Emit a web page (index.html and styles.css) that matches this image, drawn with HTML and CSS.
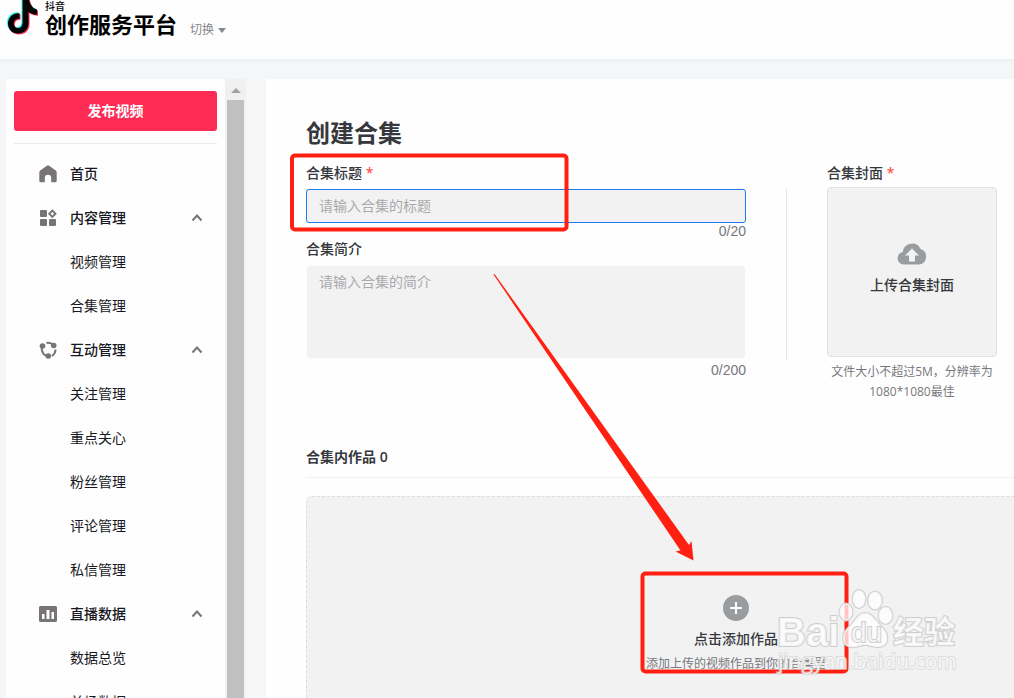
FILE: index.html
```html
<!DOCTYPE html>
<html lang="zh-CN">
<head>
<meta charset="utf-8">
<title>创作服务平台</title>
<link rel="stylesheet" href="styles.css">
</head>
<body>
<header class="topbar">
  <svg class="logo" width="36" height="36" viewBox="0 0 36 36" aria-hidden="true">
    <defs><path id="note" d="M18.500 -4H24.500C24.800 3 28 8.500 33 9.500V14.800C29.500 14.800 27 13.800 24.500 12V23C24.500 29.500 20 33.500 14 33.500S4 29.500 4 23.500 9 12.500 15.500 13.200V18.800C12.500 18.300 9.700 20 9.700 23.300 9.700 26.300 11.700 28 14 28S18.500 26 18.500 23Z"/></defs>
    <use href="#note" x="1" y="1" fill="#fe2c55"/>
    <use href="#note" x="-1" y="-1" fill="#25f4ee"/>
    <use href="#note" fill="#050505"/>
  </svg>
  <div class="brand"><span class="brand-small">抖音</span><span class="brand-name">创作服务平台</span></div>
  <button class="switch" type="button">切换<span class="caret"></span></button>
</header>
<div class="layout">
  <aside class="sidebar">
    <div class="sidebar-body">
      <button class="publish" type="button">发布视频</button>
      <nav class="nav">
        <a class="item group" href="#"><svg class="icon" viewBox="0 0 20 20"><path d="M10 1.200Q10.600 1.200 11.500 2L17.500 6.300Q18.700 7.200 18.700 8.500V16.700Q18.700 18.300 17.200 18.300H13.200V14Q13.200 10.800 10 10.800T6.800 14V18.300H2.800Q1.300 18.300 1.300 16.700V8.500Q1.300 7.200 2.500 6.300L8.500 2Q9.400 1.200 10 1.200Z"/></svg>首页</a>
        <a class="item group" href="#"><svg class="icon" viewBox="0 0 20 20"><rect x="2" y="2" width="7" height="7" rx="1"/><rect x="2" y="11" width="7" height="7" rx="1"/><rect x="11" y="11" width="7" height="7" rx="1"/><path fill-rule="evenodd" d="M14.300 1.200L18.800 5.700L14.300 10.200L9.900 5.700ZM14.300 3.900L12.500 5.700L14.300 7.500L16.100 5.700Z"/></svg>内容管理<svg class="chevron" viewBox="0 0 12 12"><path d="M1.500 8.500L6 3.500L10.500 8.500"/></svg></a>
        <a class="item" href="#">视频管理</a>
        <a class="item" href="#">合集管理</a>
        <a class="item group" href="#"><svg class="icon" viewBox="0 0 20 20"><path class="ring" d="M8.500 3Q12.500 2 16 5.500M17.500 9.500Q17.500 13.500 14 16M10.300 16.500Q3.500 15.500 3.500 6"/><circle cx="4.500" cy="6" r="2.800"/><circle cx="15.700" cy="5.500" r="2.800"/><circle cx="10.300" cy="16" r="2.800"/></svg>互动管理<svg class="chevron" viewBox="0 0 12 12"><path d="M1.500 8.500L6 3.500L10.500 8.500"/></svg></a>
        <a class="item" href="#">关注管理</a>
        <a class="item" href="#">重点关心</a>
        <a class="item" href="#">粉丝管理</a>
        <a class="item" href="#">评论管理</a>
        <a class="item" href="#">私信管理</a>
        <a class="item group" href="#"><svg class="icon" viewBox="0 0 20 20"><path fill-rule="evenodd" d="M2.500 2H17.500Q19 2 19 3.500V16.500Q19 18 17.500 18H2.500Q1 18 1 16.500V3.500Q1 2 2.500 2ZM4 10V15H6.500V10ZM8.500 6V15H11.500V6ZM13.500 8V15H16V8Z"/></svg>直播数据<svg class="chevron" viewBox="0 0 12 12"><path d="M1.500 8.500L6 3.500L10.500 8.500"/></svg></a>
        <a class="item" href="#">数据总览</a>
        <a class="item" href="#">单场数据</a>
      </nav>
    </div>
    <div class="scrollbar"><span class="scroll-up"></span><span class="thumb"></span></div>
  </aside>
  <main class="panel">
    <h1>创建合集</h1>
    <form class="form">
      <div class="fields">
        <label class="label" for="title">合集标题 <span class="required">*</span></label>
        <input class="control title-input" id="title" type="text" placeholder="请输入合集的标题">
        <div class="count">0/20</div>
        <label class="label" for="intro">合集简介</label>
        <textarea class="control intro-input" id="intro" placeholder="请输入合集的简介"></textarea>
        <div class="count intro-count">0/200</div>
      </div>
      <div class="divider"></div>
      <div class="cover">
        <div class="label">合集封面 <span class="required">*</span></div>
        <button class="upload" type="button">
          <svg width="30" height="24" viewBox="0 0 30 24" fill="#9a9da0" aria-hidden="true"><path fill-rule="evenodd" d="M6.500 23.500A6.300 6.300 0 0 1 5.800 11A9.300 9.300 0 0 1 23.500 8A8 8 0 0 1 22.500 23.500ZM15 7.500L8 14.500H12V20.500H18V14.500H22Z"/></svg>
          上传合集封面
        </button>
        <p class="hint">文件大小不超过5M，分辨率为<br>1080*1080最佳</p>
      </div>
    </form>
    <h2>合集内作品 0</h2>
    <button class="dropzone" type="button">
      <svg width="26" height="26" viewBox="0 0 26 26" aria-hidden="true"><circle cx="13" cy="13" r="13" fill="#9a9da0"/><path d="M13 7V19M7 13H19" stroke="#fff" stroke-width="2"/></svg>
      <span class="drop-title">点击添加作品</span>
      <span class="hint">添加上传的视频作品到你的合集里</span>
    </button>
  </main>
</div>
<svg class="marks" width="1014" height="698" viewBox="0 0 1014 698">
  <g fill="none" stroke="#ff2012" stroke-width="4">
    <rect x="292" y="155.500" width="274.500" height="74" rx="3"/>
    <rect x="642.500" y="573.500" width="204" height="98" rx="3"/>
  </g>
  <path fill="#ff2012" d="M493.500 274.500L494.500 274L689 545L691.500 541L693.500 560.500L675.500 551.500L680.500 550.500Z"/>
  <g class="watermark">
    <text class="wm-latin" x="777" y="646">Bai</text>
    <ellipse cx="846" cy="612" rx="6.500" ry="8.500"/><ellipse cx="859" cy="599" rx="6.500" ry="9"/><ellipse cx="875" cy="600.500" rx="7" ry="9"/><ellipse cx="885.500" cy="615.500" rx="7" ry="8.500"/>
    <path d="M865 613C872 613 875 620 882 627C891 636 888 647 878 647C872 647 870 645 865 645S857 648 851 647C841 645 841 635 848 628C855 621 858 613 865 613Z"/>
    <text class="wm-du" x="851" y="642">du</text>
    <text class="wm-cjk" x="893" y="643">经验</text>
    <text class="wm-url" x="778" y="669">jingyan.baidu.com</text>
  </g>
</svg>
</body>
</html>
```
FILE: styles.css
```css
* { box-sizing: border-box; }
body {
  margin: 0;
  height: 100vh;
  overflow: hidden;
  display: flex;
  flex-direction: column;
  background: #f4f6f8;
  color: #161823;
  font: 14px/20px "Open Sans", "Noto Sans CJK SC", sans-serif;
}
button, input, textarea { font: inherit; color: inherit; }
button { border: 0; padding: 0; cursor: pointer; }

.topbar {
  flex: none;
  height: 59px;
  display: flex;
  align-items: flex-start;
  padding-left: 4px;
  background: #fefefe;
  box-shadow: 0 1px 4px #e9ecef;
}
.logo { flex: none; }
.brand { display: flex; flex-direction: column; margin-left: 5px; color: #000; font-weight: 700; }
.brand-small { font-size: 10px; line-height: 12px; font-weight: 500; }
.brand-name { font-size: 22px; line-height: 24px; }
.switch { display: flex; align-items: center; gap: 4px; margin: 20px 0 0 13px; background: none; color: #85878a; font-size: 12px; }
.caret { border: 4px solid transparent; border-top: 5px solid #85878a; border-bottom: 0; }

.layout { flex: 1; min-height: 0; display: flex; padding: 20px 0 0 6px; gap: 20px; }
.sidebar { flex: none; width: 240px; display: flex; background: #fefefe; overflow: hidden; }
.sidebar-body { flex: 1; padding: 12px 8px; }
.publish { display: block; width: 100%; height: 40px; border-radius: 3px; background: #fe2c55; color: #fff; font-weight: 700; }
.nav { margin-top: 12px; padding-top: 8px; border-top: 1px solid #ebebed; }
.item { display: flex; align-items: center; height: 44px; padding: 0 14px 0 56px; color: #161823; text-decoration: none; }
.group { padding-left: 24px; font-weight: 500; }
.icon { width: 20px; height: 20px; margin-right: 12px; fill: #787374; }
.ring { fill: none; stroke: #787374; stroke-width: 2; }
.chevron { width: 12px; height: 12px; margin-left: auto; fill: none; stroke: #787374; stroke-width: 2; }
.scrollbar { flex: none; width: 21px; display: flex; flex-direction: column; padding: 9px 2px 0; background: #f0f0f0; }
.scroll-up { align-self: center; border: 5px solid transparent; border-bottom-color: #a3a3a3; border-top: 0; }
.thumb { flex: 1; margin-top: 7px; background: #c0c0c0; }

.panel { flex: 1; min-width: 940px; padding: 38px 40px 0; background: #fefefe; display: flex; flex-direction: column; color: #36383d; }
h1 { margin: 0; font-size: 24px; line-height: 32px; font-weight: 700; }
.form { display: flex; align-items: flex-start; margin-top: 14px; }
.fields { width: 440px; }
.label { display: block; font-weight: 500; }
.required { color: #ff3b30; }
.control { display: block; width: 100%; padding: 6px 12px; border: 1px solid transparent; border-radius: 3px; background: #f2f2f2; background-clip: padding-box; outline: 0; resize: none; }
.control::placeholder { color: #a9aaad; opacity: 1; }
.title-input { height: 34px; margin-top: 6px; padding-top: 4px; border-color: #1a7cf0; }
.count { text-align: right; font: 14px/16px "Liberation Sans", sans-serif; color: #77787c; }
.intro-input { height: 94px; margin-top: 6px; }
.intro-count { margin-top: 3px; }
.divider { width: 1px; height: 171px; margin: 26px 40px 0; background: #e6e6e8; }
.cover { width: 170px; }
.upload { width: 170px; height: 170px; margin-top: 4px; display: flex; flex-direction: column; align-items: center; justify-content: center; gap: 10px; padding-bottom: 8px; border: 1px solid #e2e2e4; border-radius: 4px; background: #f2f2f2; font-weight: 500; }
.hint { margin: 5px 0 0; font-size: 12px; text-align: center; color: #77787c; font-weight: 400; }
h2 { margin: 45px 0 0; padding-bottom: 10px; border-bottom: 1px solid #f0f0f0; font-size: 14px; font-weight: 600; }
.dropzone { flex: 1; min-height: 202px; margin-top: 18px; display: flex; flex-direction: column; align-items: center; justify-content: flex-start; padding-top: 98px; border: 1px dashed #dedee0; border-bottom: 0; border-radius: 6px 6px 0 0; background: #f2f2f2; }
.drop-title { margin-top: 8px; font-weight: 500; }

.marks { position: absolute; left: 0; top: 0; pointer-events: none; }
.watermark { fill: #fff; fill-opacity: .75; stroke: #cfcfcf; stroke-width: 2; paint-order: stroke; font-family: "Liberation Sans", sans-serif; font-weight: 700; }
.wm-latin { font-size: 40px; }
.wm-du { font-size: 28px; font-weight: 400; }
.wm-cjk { font-family: "Noto Sans CJK SC", sans-serif; font-size: 31px; }
.wm-url { font-family: "Open Sans", sans-serif; font-size: 21px; font-weight: 500; stroke-opacity: .6; }
```
